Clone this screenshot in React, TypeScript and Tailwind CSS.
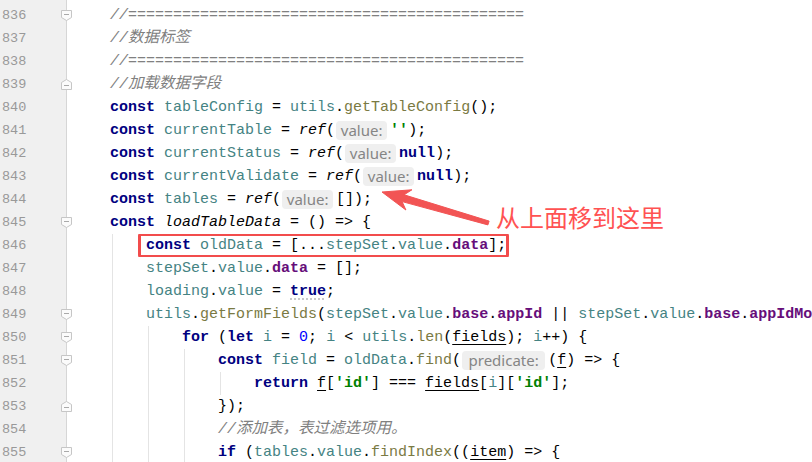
type Tok = [string, string];

type Line = {
	n: number;
	fold?: "s" | "e";
	ind: number;
	guides: number[];
	toks: Tok[];
	box?: boolean;
};

const kinds: Record<string, string> = {
	k: "font-bold text-[#000080]",
	v: "text-[#458383]",
	f: "text-[#7a7a43]",
	c: "italic text-[#808080]",
	z: "italic text-[#808080] text-[15.5px]",
	p: "font-bold text-[#660e7a]",
	s: "font-bold text-[#008000]",
	n: "text-[#0000ff]",
	t: "text-black",
	i: "italic text-black",
	u: "underline underline-offset-[3px] text-black",
	w: "font-bold text-[#000080] underline decoration-dotted decoration-[#b8b8b8] underline-offset-[4px]"
};

const lines: Line[] = [
	{ n: 836, fold: "s", ind: 1, guides: [], toks: [["c", "//" + "=".repeat(44)]] },
	{ n: 837, ind: 1, guides: [], toks: [["c", "//"], ["z", "数据标签"]] },
	{ n: 838, ind: 1, guides: [], toks: [["c", "//" + "=".repeat(44)]] },
	{ n: 839, fold: "e", ind: 1, guides: [], toks: [["c", "//"], ["z", "加载数据字段"]] },
	{
		n: 840,
		ind: 1,
		guides: [],
		toks: [["k", "const"], ["t", " "], ["v", "tableConfig"], ["t", " = "], ["v", "utils"], ["t", "."], ["f", "getTableConfig"], ["t", "();"]]
	},
	{
		n: 841,
		ind: 1,
		guides: [],
		toks: [["k", "const"], ["t", " "], ["v", "currentTable"], ["t", " = "], ["i", "ref"], ["t", "("], ["h", "value:"], ["s", "''"], ["t", ");"]]
	},
	{
		n: 842,
		ind: 1,
		guides: [],
		toks: [["k", "const"], ["t", " "], ["v", "currentStatus"], ["t", " = "], ["i", "ref"], ["t", "("], ["h", "value:"], ["k", "null"], ["t", ");"]]
	},
	{
		n: 843,
		ind: 1,
		guides: [],
		toks: [["k", "const"], ["t", " "], ["v", "currentValidate"], ["t", " = "], ["i", "ref"], ["t", "("], ["h", "value:"], ["k", "null"], ["t", ");"]]
	},
	{
		n: 844,
		ind: 1,
		guides: [],
		toks: [["k", "const"], ["t", " "], ["v", "tables"], ["t", " = "], ["i", "ref"], ["t", "("], ["h", "value:"], ["t", "[]);"]]
	},
	{ n: 845, fold: "s", ind: 1, guides: [], toks: [["k", "const"], ["t", " "], ["i", "loadTableData"], ["t", " = () => {"]] },
	{
		n: 846,
		ind: 2,
		guides: [1],
		box: true,
		toks: [["k", "const"], ["t", " "], ["v", "oldData"], ["t", " = [..."], ["v", "stepSet"], ["t", "."], ["v", "value"], ["t", "."], ["p", "data"], ["t", "];"]]
	},
	{ n: 847, ind: 2, guides: [1], toks: [["v", "stepSet"], ["t", "."], ["v", "value"], ["t", "."], ["p", "data"], ["t", " = [];"]] },
	{ n: 848, ind: 2, guides: [1], toks: [["v", "loading"], ["t", "."], ["v", "value"], ["t", " = "], ["w", "true"], ["t", ";"]] },
	{
		n: 849,
		fold: "s",
		ind: 2,
		guides: [1],
		toks: [
			["v", "utils"],
			["t", "."],
			["f", "getFormFields"],
			["t", "("],
			["v", "stepSet"],
			["t", "."],
			["v", "value"],
			["t", "."],
			["p", "base"],
			["t", "."],
			["p", "appId"],
			["t", " || "],
			["v", "stepSet"],
			["t", "."],
			["v", "value"],
			["t", "."],
			["p", "base"],
			["t", "."],
			["p", "appIdMo"]
		]
	},
	{
		n: 850,
		fold: "s",
		ind: 3,
		guides: [1, 2],
		toks: [
			["k", "for"],
			["t", " ("],
			["k", "let"],
			["t", " "],
			["v", "i"],
			["t", " = "],
			["n", "0"],
			["t", "; "],
			["v", "i"],
			["t", " < "],
			["v", "utils"],
			["t", "."],
			["f", "len"],
			["t", "("],
			["u", "fields"],
			["t", "); "],
			["v", "i"],
			["t", "++) {"]
		]
	},
	{
		n: 851,
		fold: "s",
		ind: 4,
		guides: [1, 2, 3],
		toks: [
			["k", "const"],
			["t", " "],
			["v", "field"],
			["t", " = "],
			["v", "oldData"],
			["t", "."],
			["f", "find"],
			["t", "("],
			["h", "predicate:"],
			["t", "("],
			["u", "f"],
			["t", ") => {"]
		]
	},
	{
		n: 852,
		ind: 5,
		guides: [1, 2, 3, 4],
		toks: [
			["k", "return"],
			["t", " "],
			["u", "f"],
			["t", "["],
			["s", "'id'"],
			["t", "] === "],
			["u", "fields"],
			["t", "["],
			["v", "i"],
			["t", "]["],
			["s", "'id'"],
			["t", "];"]
		]
	},
	{ n: 853, fold: "e", ind: 4, guides: [1, 2, 3], toks: [["t", "});"]] },
	{ n: 854, ind: 4, guides: [1, 2, 3], toks: [["c", "//"], ["z", "添加表，表过滤选项用。"]] },
	{
		n: 855,
		fold: "s",
		ind: 4,
		guides: [1, 2, 3],
		toks: [
			["k", "if"],
			["t", " ("],
			["v", "tables"],
			["t", "."],
			["v", "value"],
			["t", "."],
			["f", "findIndex"],
			["t", "(("],
			["u", "item"],
			["t", ") => {"]
		]
	}
];

function FoldMark({ kind }: { kind?: "s" | "e" }) {
	if (!kind) return null;
	const isStart = kind === "s";
	return (
		<svg width="11" height="11" viewBox="0 0 11 11" className="block shrink-0">
			<path
				d={isStart ? "M0.5 0.5H10.5V7.5L5.5 10.5L0.5 7.5Z" : "M0.5 10.5H10.5V3.5L5.5 0.5L0.5 3.5Z"}
				fill="#fbfbfb"
				stroke="#c6c6c6"
			/>
			<path d={isStart ? "M3 4.5H8" : "M3 6.5H8"} stroke="#a9a9a9" />
		</svg>
	);
}

function Hint({ label }: { label: string }) {
	const wide = label.length > 6;
	return (
		<span
			className={`ml-[1px] mr-[3px] flex h-[19px] shrink-0 items-center justify-center rounded-[4px] bg-[#efefef] font-['Noto_Sans','Open_Sans',sans-serif] text-[15px] leading-[19px] text-[#858585] ${
				wide ? "w-[83px]" : "w-[51px]"
			}`}
		>
			{label}
		</span>
	);
}

function Tokens({ toks }: { toks: Tok[] }) {
	return (
		<>
			{toks.map(([kind, text], i) =>
				kind === "h" ? (
					<Hint key={i} label={text} />
				) : (
					<span key={i} className={`shrink-0 whitespace-pre ${kinds[kind]}`}>
						{text}
					</span>
				)
			)}
		</>
	);
}

function CodeLine({ line }: { line: Line }) {
	return (
		<div className="flex h-[23px] leading-[23px]">
			<div className="w-[61px] shrink-0 bg-[#f0f0f0] pl-[2px] text-[13.5px] text-[#999999]">{line.n}</div>
			<div className="flex w-[12px] shrink-0 items-center bg-[linear-gradient(to_right,#f0f0f0_5px,#d6d6d6_5px,#d6d6d6_6px,#ffffff_6px)]">
				<FoldMark kind={line.fold} />
			</div>
			<div className="flex min-w-0 flex-1 items-center overflow-hidden pl-[1px] text-[15px]">
				{Array.from({ length: line.ind }).map((_, u) => (
					<span key={u} className="h-[23px] w-[36px] shrink-0">
						{line.guides.includes(u) && <span className="ml-[2px] block h-full w-px bg-[#e4e4e4]" />}
					</span>
				))}
				{line.box ? (
					<span className="-ml-[8px] flex h-[25px] shrink-0 items-center rounded-[3px] border-[3px] border-[#f24c4c] pl-[5px]">
						<Tokens toks={line.toks} />
					</span>
				) : (
					<Tokens toks={line.toks} />
				)}
			</div>
		</div>
	);
}

export default function App() {
	return (
		<div className="relative h-[462px] w-[812px] overflow-hidden bg-white font-['Liberation_Mono','Noto_Sans_CJK_SC',monospace]">
			<div className="flex h-[4px]">
				<div className="w-[61px] shrink-0 bg-[#f0f0f0]" />
				<div className="w-[12px] shrink-0 bg-[linear-gradient(to_right,#f0f0f0_5px,#d6d6d6_5px,#d6d6d6_6px,#ffffff_6px)]" />
			</div>
			{lines.map((line) => (
				<CodeLine key={line.n} line={line} />
			))}
			<div className="flex h-[40px]">
				<div className="w-[61px] shrink-0 bg-[#f0f0f0]" />
				<div className="w-[12px] shrink-0 bg-[linear-gradient(to_right,#f0f0f0_5px,#d6d6d6_5px,#d6d6d6_6px,#ffffff_6px)]" />
			</div>

			{/* annotation: arrow + note */}
			<svg className="pointer-events-none absolute inset-0" width="812" height="462" viewBox="0 0 812 462">
				<polygon
					points="382,192 411.9,189.8 404.1,194.8 489.1,221.1 487.9,224.9 402.1,201.6 405.9,210"
					fill="#f25454"
					stroke="#f25454"
					strokeWidth="1"
					strokeLinejoin="round"
				/>
			</svg>
			<div className="absolute left-[496px] top-[202px] whitespace-nowrap font-['Noto_Sans_CJK_SC',sans-serif] text-[24px] leading-[30px] text-[#ff5252]">
				从上面移到这里
			</div>
		</div>
	);
}
